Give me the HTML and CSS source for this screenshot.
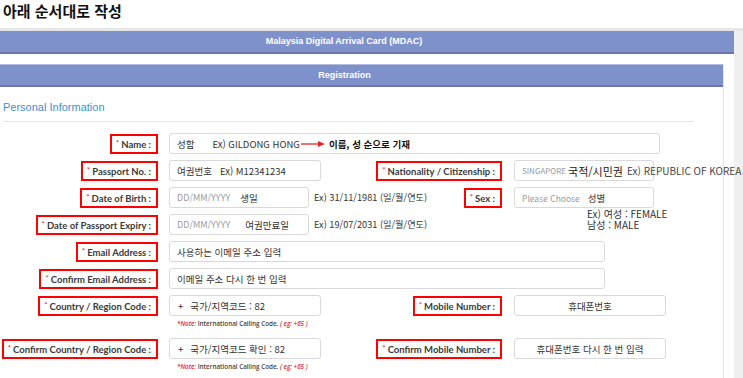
FILE: index.html
```html
<!DOCTYPE html>
<html lang="ko">
<head>
    <meta charset="UTF-8">
    <meta name="viewport" content="width=device-width, initial-scale=1.0">
    <title>MDAC 작성</title>
    <link rel="stylesheet" href="styles.css">
</head>
<body>
    <h1 class="title">아래 순서대로 작성</h1>

    <div class="frame">
        <div class="panel">
            <div class="bar bar-main">Malaysia Digital Arrival Card (MDAC)</div>

            <div class="section">
                <div class="bar bar-sub">Registration</div>

                <div class="section-body">
                    <div class="legend">Personal Information</div>

                    <div class="form">
                        <!-- 이름 -->
                        <div class="row">
                            <div class="lbl"><span class="req"><i>*</i>Name :</span></div>
                            <div class="fld">
                                <div class="inp w-name">
                                    <span>성함</span>
                                    <span class="gap-name">Ex) GILDONG HONG</span>
                                    <svg class="arrow" width="24" height="8" viewBox="0 0 24 8">
                                        <line x1="0" y1="4" x2="18" y2="4" stroke="#e8262a" stroke-width="1.3"/>
                                        <polygon points="17,1 24,4 17,7" fill="#e8262a"/>
                                    </svg>
                                    <b class="note-bold">이름, 성 순으로 기재</b>
                                </div>
                            </div>
                        </div>

                        <!-- 여권번호 / 국적 -->
                        <div class="row">
                            <div class="lbl"><span class="req"><i>*</i>Passport No. :</span></div>
                            <div class="fld half">
                                <div class="inp w-mid">
                                    <span>여권번호</span>
                                    <span class="gap-pass">Ex) M12341234</span>
                                </div>
                            </div>
                            <div class="lbl r"><span class="req"><i>*</i>Nationality / Citizenship :</span></div>
                            <div class="fld r">
                                <div class="inp w-right">
                                    <span class="ph caps">SINGAPORE</span>
                                    <span class="big">국적/시민권</span>
                                    <span class="gap-kor">Ex) REPUBLIC OF KOREA</span>
                                </div>
                            </div>
                        </div>

                        <!-- 생일 / 성별 -->
                        <div class="row">
                            <div class="lbl"><span class="req"><i>*</i>Date of Birth :</span></div>
                            <div class="fld half">
                                <div class="inp w-date">
                                    <span class="ph">DD/MM/YYYY</span>
                                    <span class="gap-birth">생일</span>
                                </div>
                                <span class="hint">Ex) 31/11/1981 (일/월/연도)</span>
                            </div>
                            <div class="lbl r"><span class="req"><i>*</i>Sex :</span></div>
                            <div class="fld r">
                                <div class="inp w-right">
                                    <span class="ph choose">Please Choose</span>
                                    <span class="gap-sex">성별</span>
                                </div>
                                <div class="sex-hint">Ex) 여성 : FEMALE<br>남성 : MALE</div>
                            </div>
                        </div>

                        <!-- 여권 만료일 -->
                        <div class="row">
                            <div class="lbl"><span class="req"><i>*</i>Date of Passport Expiry :</span></div>
                            <div class="fld half">
                                <div class="inp w-date">
                                    <span class="ph">DD/MM/YYYY</span>
                                    <span class="gap-exp">여권만료일</span>
                                </div>
                                <span class="hint">Ex) 19/07/2031 (일/월/연도)</span>
                            </div>
                        </div>

                        <!-- 이메일 -->
                        <div class="row">
                            <div class="lbl"><span class="req"><i>*</i>Email Address :</span></div>
                            <div class="fld">
                                <div class="inp w-email"><span>사용하는 이메일 주소 입력</span></div>
                            </div>
                        </div>

                        <div class="row">
                            <div class="lbl"><span class="req"><i>*</i>Confirm Email Address :</span></div>
                            <div class="fld">
                                <div class="inp w-email"><span>이메일 주소 다시 한 번 입력</span></div>
                            </div>
                        </div>

                        <!-- 국가코드 / 휴대폰 -->
                        <div class="row with-note">
                            <div class="lbl"><span class="req"><i>*</i>Country / Region Code :</span></div>
                            <div class="fld half">
                                <div class="inp w-mid">
                                    <span class="plus">+</span>
                                    <span>국가/지역코드 : 82</span>
                                </div>
                                <div class="call-note"><em>*Note:</em> International Calling Code. <em>( eg: +65 )</em></div>
                            </div>
                            <div class="lbl r"><span class="req"><i>*</i>Mobile Number :</span></div>
                            <div class="fld r">
                                <div class="inp w-mobile center"><span>휴대폰번호</span></div>
                            </div>
                        </div>

                        <div class="row with-note">
                            <div class="lbl"><span class="req"><i>*</i>Confirm Country / Region Code :</span></div>
                            <div class="fld half">
                                <div class="inp w-mid">
                                    <span class="plus">+</span>
                                    <span>국가/지역코드 확인 : 82</span>
                                </div>
                                <div class="call-note"><em>*Note:</em> International Calling Code. <em>( eg: +65 )</em></div>
                            </div>
                            <div class="lbl r"><span class="req"><i>*</i>Confirm Mobile Number :</span></div>
                            <div class="fld r">
                                <div class="inp w-mobile center"><span>휴대폰번호 다시 한 번 입력</span></div>
                            </div>
                        </div>
                    </div>
                </div>
            </div>
        </div>
    </div>
</body>
</html>
```

FILE: styles.css
```css
body {
    margin: 0;
    padding: 0;
    overflow: hidden;
    background: #fff;
    color: #333;
    font-family: "Noto Sans CJK KR", "Noto Sans", sans-serif;
}

.title {
    margin: 0;
    padding: 0 3px;
    height: 28px;
    font-size: 15px;
    line-height: 22px;
    font-weight: 700;
    color: #111;
}

.frame {
    background: #f0f0f0;
    border-top: 3px solid #e6e6e6;
    height: 347px;
}

.panel {
    display: flex;
    flex-direction: column;
    width: 734px;
    height: 100%;
    background: #fff;
}

.bar {
    box-sizing: border-box;
    background: #7f91ca;
    color: #fff;
    font-family: "Liberation Sans", Arial, sans-serif;
    font-weight: 700;
    font-size: 9px;
    text-align: center;
}

.bar-main {
    height: 23px;
    line-height: 21px;
    border-bottom: 2px solid #6c77a9;
    padding-right: 46px;
}

.section {
    flex: 1;
    min-height: 0;
    margin-top: 10px;
    width: 724px;
    box-sizing: border-box;
    border-right: 1px solid #e3e3e3;
}

.bar-sub {
    height: 23px;
    line-height: 20px;
    border-top: 1px solid #b3bbe0;
    border-bottom: 2px solid #6c77a9;
    padding-right: 34px;
}

.legend {
    margin: 0 29px 0 3px;
    padding: 14px 0 7px;
    line-height: 13px;
    font-family: "Liberation Sans", Arial, sans-serif;
    font-size: 11px;
    color: #3d8fd3;
    border-bottom: 1px solid #e6e6e6;
}

.form {
    padding-top: 11px;
}

.row {
    display: flex;
    height: 21px;
    margin-bottom: 6px;
}

.row.with-note {
    margin-bottom: 22px;
}

.row:last-child {
    margin-bottom: 0;
}

.lbl {
    width: 158px;
    flex-shrink: 0;
    display: flex;
    justify-content: flex-end;
}

.lbl.r {
    width: 153px;
}

.req {
    display: inline-flex;
    align-items: center;
    box-sizing: border-box;
    height: 20px;
    margin-top: 1px;
    padding: 0 5px 0 4px;
    border: 2px solid #f00;
    font-family: Lato, "Open Sans", sans-serif;
    font-weight: 700;
    font-size: 9.5px;
    color: #3a3a3a;
    white-space: nowrap;
}

.req i {
    font-style: normal;
    font-weight: 400;
    color: #e4262b;
    font-size: 8px;
    margin-right: 2px;
    position: relative;
    top: -1px;
}

.fld {
    position: relative;
    margin-left: 11px;
    display: flex;
    align-items: flex-start;
    white-space: nowrap;
}

.fld.half {
    width: 180px;
    flex-shrink: 0;
}

.fld.r {
    margin-left: 12px;
}

.inp {
    display: flex;
    align-items: center;
    box-sizing: border-box;
    height: 21px;
    padding: 0 7px;
    border: 1px solid #d9d9d9;
    border-radius: 3px;
    font-size: 9.5px;
    color: #333;
    white-space: nowrap;
    flex-shrink: 0;
}

.inp.center {
    justify-content: center;
}

.w-name { width: 491px; }
.w-mid { width: 152px; }
.w-date { width: 140px; }
.w-email { width: 436px; }
.w-right { width: 140px; }
.w-mobile { width: 152px; }

.ph {
    color: #9a9a9a;
    font-size: 9px;
}

.ph.caps {
    font-size: 8px;
}

.ph.choose {
    font-size: 8.5px;
}

.gap-name { margin-left: 18px; }
.gap-pass { margin-left: 8px; }
.gap-birth { margin-left: 10px; }
.gap-exp { margin-left: 15px; }
.gap-sex { margin-left: 8px; }

.arrow {
    margin-left: 1px;
}

.note-bold {
    margin-left: 4px;
    font-weight: 700;
    color: #111;
}

.big {
    margin-left: 2px;
    font-size: 11px;
    color: #222;
}

.gap-kor {
    margin-left: 4px;
    font-size: 10px;
    color: #444;
}

.hint {
    margin-left: 5px;
    line-height: 21px;
    font-size: 9.2px;
    color: #333;
}

.sex-hint {
    position: absolute;
    top: 21px;
    left: 73px;
    font-size: 10px;
    line-height: 11px;
    color: #333;
}

.plus {
    margin: 0 7px 0 1px;
}

.row.with-note .fld.half {
    flex-direction: column;
}

.call-note {
    margin: 4px 0 0 8px;
    font-family: "Open Sans", sans-serif;
    font-size: 6.3px;
    line-height: 8px;
    font-weight: 600;
    color: #444;
}

.call-note em {
    color: #e4262b;
}
```
